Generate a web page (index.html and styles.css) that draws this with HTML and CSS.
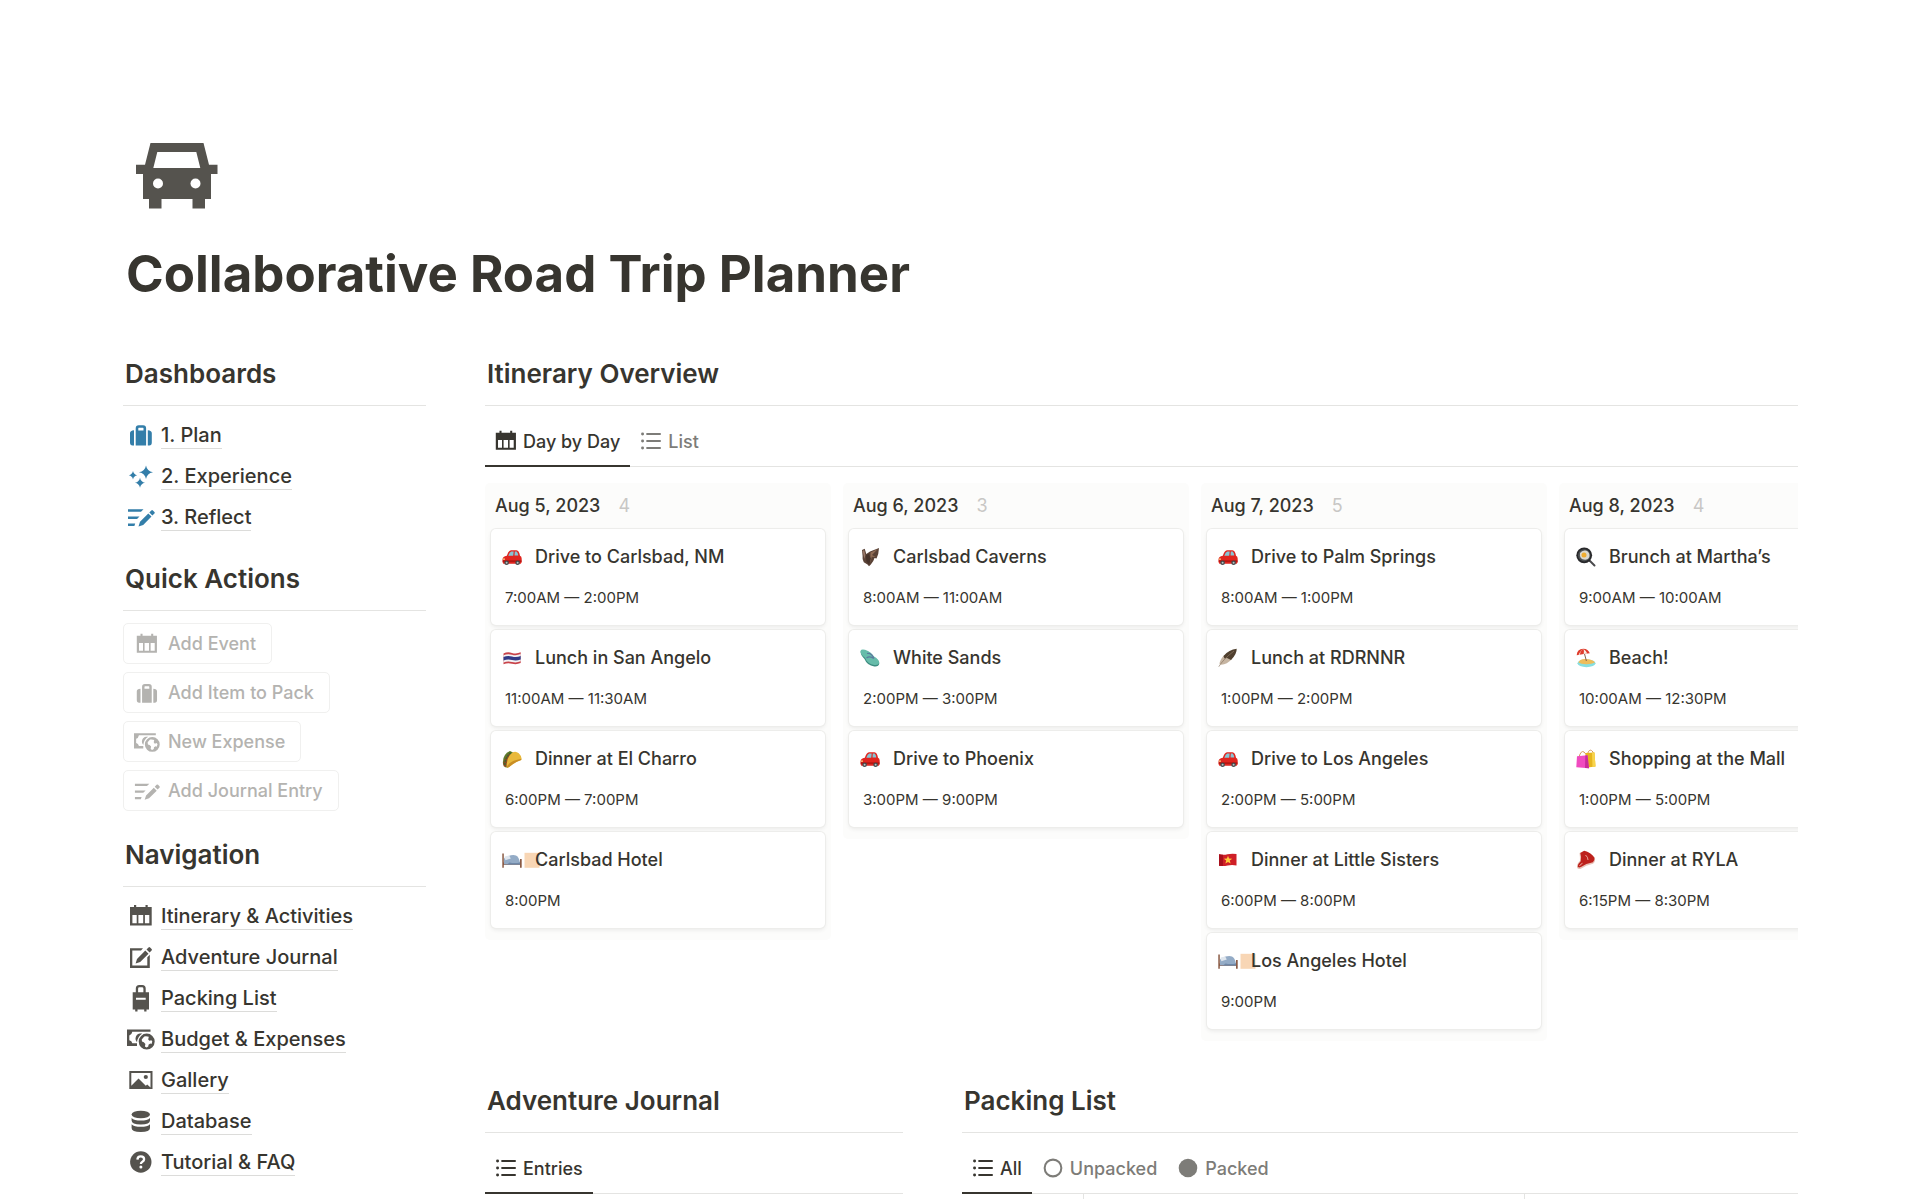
FILE: index.html
```html
<!DOCTYPE html>
<html lang="en">
<head>
    <meta charset="UTF-8">
    <meta name="viewport" content="width=device-width, initial-scale=1.0">
    <title>Collaborative Road Trip Planner</title>
    <link rel="stylesheet" href="styles.css">
</head>
<body>
    <!-- Icon sprite -->
    <svg class="sprite" aria-hidden="true">
        <symbol id="i-calendar" viewBox="0 0 28 28">
            <path fill-rule="evenodd" d="M3 5h4V3h2.2v2h9.3V3h2.2v2h4v18.4H3zM5.4 13v8.2h4.3V13zm6 0v8.2h4.8V13zm6.5 0v8.2h4.4V13z"/>
        </symbol>
        <symbol id="i-suitcase" viewBox="0 0 28 28">
            <path fill-rule="evenodd" d="M8.7 7.2q0-3 3-3h4.4q3 0 3 3v17.3H8.7zm2.6 0v2.2h5.2V7.2q0-.5-.5-.5h-4.2q-.5 0-.5.5z"/>
            <path d="M7 9.3v15.2H5.5q-2.5 0-2.5-3v-9.3q0-2.6 4-2.9zM20.8 9.3v15.2h1.5q2.5 0 2.5-3v-9.3q0-2.6-4-2.9z"/>
        </symbol>
        <symbol id="i-sparkles" viewBox="0 0 28 28">
            <path d="M19 3.500q1 5.700 7 6.700-6 1-7 6.700-1-5.700-7-6.700 6-1 7-6.700zM6 9q.7 3.500 4.200 4.200Q6.700 13.900 6 17.400q-.7-3.500-4.200-4.200Q5.300 12.500 6 9zM13 15.800q.8 4.200 5 5-4.200.8-5 5-.8-4.200-5-5 4.200-.8 5-5z"/>
        </symbol>
        <symbol id="i-reflect" viewBox="0 0 28 28">
            <path d="M1 6.200h15.500L14 8.700H1zM1 13.400h11.500L10 15.900H1zM1 20.500h7.200l-.8 2.400H1z"/>
            <path d="M11.500 23.400l1.500-4.600 8.300-8.400 3.200 3.200-8.300 8.300zM22.300 9.400l2-2q.8-.8 1.600 0l1.500 1.500q.8.8 0 1.600l-2 2z"/>
        </symbol>
        <symbol id="i-edit" viewBox="0 0 28 28">
            <path d="M3 5.300h13L14 7.500H5.300v15h15v-8.300l2.500-2.500v13.200H3z"/>
            <path d="M8.600 20.600l1.400-4.700 8.300-8.300 3.200 3.200-8.300 8.300zM19.500 6.400l2-2q.8-.8 1.600 0l1.500 1.500q.8.8 0 1.600l-2 2z"/>
        </symbol>
        <symbol id="i-luggage" viewBox="0 0 28 28">
            <path fill-rule="evenodd" d="M8.800 8.300V4.500q0-3.500 3.500-3.500h2.900q3.500 0 3.500 3.500v3.800H22v17.200h-2.500v2h-2.300v-2h-6.700v2H8.200v-2H5.700V8.300zm2.300 0h5.300V4.700q0-1.400-1.400-1.400h-2.500q-1.400 0-1.400 1.400zM9 13.700v2h9.700v-2z"/>
        </symbol>
        <symbol id="i-money" viewBox="0 0 28 28">
            <path d="M0 4.500h23.500v2.300H5.300q-.5 3-3 3.800v4.600q2.500.6 3 3H10V21H0z"/>
            <path d="M10 17.200q-1.800-1.600-1.500-4Q9 9 12.800 8.400h2.500Q10.500 11.500 10 17.200z"/>
            <path fill-rule="evenodd" d="M19.700 8.600a8 8 0 1 1 0 16 8 8 0 0 1 0-16zm-2.400 2.800l-2.600 3 .3 2.200 1.800.6 1.600 1.700-.5 2.600 1.600 1 1.800-1 .2-1.800 1.800-1.200 1.200.5.800-2.600-.9-1.200-2 .6-1.200-1.400.6-2.600q-2.300-1-4.500-.4z"/>
        </symbol>
        <symbol id="i-image" viewBox="0 0 28 28">
            <path fill-rule="evenodd" d="M2.300 5h23.200v18H2.300zm2 2v12.700l7.200-7.200 7.300 7.300 1.400-1.400 3.300 3V7z"/>
            <circle cx="18.800" cy="11" r="2.100"/>
        </symbol>
        <symbol id="i-database" viewBox="0 0 28 28">
            <ellipse cx="13.800" cy="7.500" rx="9.200" ry="3.800"/>
            <path d="M4.600 11q2.500 2.600 9.200 2.600T23 11v2.500q0 4-9.200 4t-9.200-4zM4.600 17.200q2.500 2.600 9.200 2.600t9.200-2.600V21q0 4-9.200 4t-9.200-4z"/>
        </symbol>
        <symbol id="i-help" viewBox="0 0 28 28">
            <circle cx="13.800" cy="14" r="10.700"/>
            <path d="M10.400 11.600q.1-3.200 3.400-3.200 3.300 0 3.300 2.800 0 1.500-1.700 2.500-1.500.9-1.500 2.300" fill="none" stroke="#fff" stroke-width="2.300"/>
            <circle cx="13.900" cy="18.900" r="1.500" fill="#fff"/>
        </symbol>
        <symbol id="i-list" viewBox="0 0 28 28">
            <path d="M9 5.500h15.500v2H9zM9 13h15.500v2H9zM9 20.500h15.500v2H9z"/>
            <circle cx="4.900" cy="6.500" r="1.600"/><circle cx="4.900" cy="14" r="1.600"/><circle cx="4.900" cy="21.500" r="1.600"/>
        </symbol>
        <symbol id="i-ring" viewBox="0 0 28 28">
            <circle cx="14" cy="14" r="9" fill="none" stroke="currentColor" stroke-width="2.200"/>
        </symbol>
        <symbol id="i-dot" viewBox="0 0 28 28">
            <circle cx="14" cy="14" r="10"/>
        </symbol>

        <!-- Event pictures -->
        <symbol id="e-car" viewBox="0 0 20 20">
            <path fill="#e0251f" d="M.5 12.500q.2-3 4.300-3.700Q6.500 3.500 9 3.200h5.500q2.700.3 3.500 5.500 1.700.7 1.700 3v3.500l-1 1.600H1.300L.5 15z"/>
            <path fill="#86c5d4" d="M6.300 8.800q1.300-3.800 3-4.200h2.400l-.5 4.200zM12.800 4.600h1.500q1.400.3 2 4h-3.800z"/>
            <path fill="#a3130f" d="M.8 13.500h18.700v1.200H.8z"/>
            <g fill="#44494b"><circle cx="4.600" cy="15.800" r="2.300"/><circle cx="15.600" cy="15.800" r="2.300"/></g>
            <g fill="#b9bfc1"><circle cx="4.600" cy="15.800" r="1"/><circle cx="15.600" cy="15.800" r="1"/></g>
            <path fill="#ffd07a" d="M1 11.500h2v1.300H1z"/>
        </symbol>
        <symbol id="e-thai" viewBox="0 0 20 20">
            <path fill="#c8434a" d="M1.500 5.400q4-1.800 8.500-.5t8.700-.6v10.800q-4.400 1.800-8.700.6t-8.500.5z"/>
            <path fill="#f2f2f4" d="M1.500 7.200q4-1.800 8.500-.5t8.700-.6v7.200q-4.400 1.800-8.700.6t-8.500.5z"/>
            <path fill="#313a86" d="M1.500 9q4-1.800 8.500-.5t8.700-.6v3.600q-4.400 1.800-8.700.6t-8.500.5z"/>
        </symbol>
        <symbol id="e-taco" viewBox="0 0 20 20">
            <path fill="#5d7a2b" d="M1 15Q0 5.500 8 2l4 2-6 14.500-3-.2z"/>
            <path fill="#8c4a22" d="M1.200 14.500q2-7.500 7-10.700L9 6l-5 12-2.300-.8z"/>
            <path fill="#e9b93b" d="M4.600 18.300Q4.300 8 10.500 3.500q3-2 6.300.7Q20.500 8 19.200 11q-7 2.500-11.400 6.500-1.500 1.500-3.200.8z"/>
            <path fill="#c98e24" d="M4.600 18.300q2.500-6.500 14.800-8.600l-.2 1.300q-7 2.500-11.400 6.500-1.500 1.500-3.200.8z"/>
            <path fill="none" stroke="#2f6a35" stroke-width="1.200" stroke-dasharray="2 1" d="M2.800 16Q3 8 9.300 3.300"/>
        </symbol>
        <symbol id="e-bed" viewBox="0 0 20 20">
            <path fill="#8a5a44" d="M.3 3.500h1.500v9H18V9h1.700v8.800H18V15H1.800v2.700H.3z"/>
            <path fill="#93abc6" d="M3 7.500q7-3.500 11-2Q17 7 18 12.800v1.600H2V8.500z"/>
            <path fill="#dfe6ee" d="M2.600 6.600l4.600-1 1.600 3-5.500 1.600z"/>
            <path fill="#6e88a8" d="M7.500 12.500q5 1 10.500 0v1.900H5z"/>
            <path fill="#f8d6b5" d="M22.500 2.800h15v15h-15z"/>
        </symbol>
        <symbol id="e-bat" viewBox="0 0 20 20">
            <path fill="#5a4236" d="M10 4.500L19 1q-.2 6-2.500 10.500l-2-.5-1.200 3-2.500 3.500-1.800 1.800-1.500-1.800-3.700-2.200Q2 12 2.600 9L2 3l2.700-1.200L6.300 7z"/>
            <path fill="#8f6c55" d="M10.500 5.500L17.500 2.300 12 8l3.800 2-4-.3-1.500 6z"/>
            <path fill="#463229" d="M5.800 8l3-1 2 4.500-1.600 6-2.700-3z"/>
            <path fill="#9a7868" d="M2.600 4l1.500-1 1.300 5-1 4z"/>
        </symbol>
        <symbol id="e-sandal" viewBox="0 0 20 20">
            <path fill="#3c8c80" d="M.6 3.500Q1 1.600 5 2.500q6.500 2 8.600 6.500 5.600 3 5.700 6.500-.6 3.400-5 2.900Q7 17.500 4.500 11 .5 7 .6 3.500z"/>
            <path fill="#67bcaa" d="M.6 2.700Q1.200.8 5 1.700q6.500 2 8.600 6.500 5.600 3 5.700 6.500-.8 2.800-5 2.200Q7.500 16 5 9.700 0 6 .6 2.700z"/>
            <path fill="none" stroke="#5c7a9e" stroke-width="1.200" d="M7 5.500Q11.500 4.500 14 10.500M6.500 10q3-2.500 7.500.5"/>
        </symbol>
        <symbol id="e-feather" viewBox="0 0 20 20">
            <path fill="#c6b5a2" d="M1.500 16Q2 11 6.500 7l7.500 4Q9 16.500 3.300 16.800z"/>
            <path fill="#50402f" d="M5.500 8Q11 1.500 18.700.8 19 6 13 12L9 10l-2.500.5z"/>
            <path fill="none" stroke="#8b7763" stroke-width=".7" d="M.8 18.700Q5 11.500 16 3"/>
        </symbol>
        <symbol id="e-viet" viewBox="0 0 20 20">
            <path fill="#cf1f27" d="M1 4.300q4.500 1 8.500 0t9-.3v11.500q-4.500-1-8.800 0T1 15.800z"/>
            <path fill="#a80f1c" d="M1 4.300l4 .4v11.400l-4-.3z"/>
            <path fill="#ffc93c" d="M10 5.700l1.100 2.900 3.100.1-2.400 1.900.8 3-2.600-1.700-2.600 1.700.8-3-2.400-1.900 3.100-.1z"/>
        </symbol>
        <symbol id="e-pan" viewBox="0 0 20 20">
            <path stroke="#4a4a4c" stroke-width="2" stroke-linecap="round" d="M13.500 13.500L18.500 18.500"/>
            <circle cx="8.200" cy="8.300" r="7.900" fill="#28292b"/>
            <circle cx="8.200" cy="8.300" r="6.100" fill="#4d5153"/>
            <path fill="#dcd9cf" d="M4 6q2-3 5.500-2.500T13.500 8q.3 4-4 4.700Q3 13 4 6z"/>
            <circle cx="8" cy="8" r="2.500" fill="#f0ad31"/>
        </symbol>
        <symbol id="e-beach" viewBox="0 0 20 20">
            <ellipse cx="10.500" cy="15.300" rx="9" ry="3.900" fill="#87dfe0"/>
            <path fill="#eebd5b" d="M2.500 14.500q1-3.500 6-3.600 8-.2 10.500 3.600-4 2-9 1.800t-7.500-1.800z"/>
            <path stroke="#85604a" stroke-width="1" d="M8 4l2.400 9"/>
            <path fill="#df3c2c" d="M.7 7.200Q1 1 7.300.7q5 .2 6.500 4.600l-6 .8z"/>
            <path fill="#f7eee3" d="M4 6.800Q4 3 7.300.9q-2.500 1-4.700 5.900zM7.700 6q.8-3-.3-5 2.800 1.700 3.800 4.600z"/>
        </symbol>
        <symbol id="e-bags" viewBox="0 0 20 20">
            <path fill="none" stroke="#d79a5d" stroke-width="1" d="M11.500 5Q13 0 15.500 1.500T17 5M3 8Q5 1 8 3t2 5"/>
            <path fill="#e6b51f" d="M9.500 4l9-.5 1 14-8 1z"/>
            <path fill="#f8d44c" d="M16 3.800l2.500-.3 1 14-3 .4z"/>
            <path fill="#f04bc0" d="M1 7.200l10.500-1 1.500 13L.3 18.300z"/>
            <path fill="#c92c9b" d="M9.300 6.500l2.200-.3 1.500 13-4-.3z"/>
        </symbol>
        <symbol id="e-meat" viewBox="0 0 20 20">
            <path fill="#e8c2b8" d="M1 17.500q-.5-3.500 3-6.800Q4 6.500 3.500 3L8 1q7 1.500 11 7 .5 4-2 5.800Q10 15 4.500 19q-2.800.5-3.500-1.500z"/>
            <path fill="#bd211c" d="M1.700 16.500q.3-3 3-5.300Q5.500 6 4.300 3L8.200.8q6.500 1.700 10.200 6.900.5 3-1.500 4.500-7 1.200-12 4.800-2.200 1-3.200-.5z"/>
            <path fill="none" stroke="#eeb3a8" stroke-width=".9" d="M9.500 5q2.500 2 2.500 5M3.500 16q1-2 3-2.700"/>
        </symbol>
    </svg>

    <div class="page">
        <header class="page-header">
            <svg class="page-icon" viewBox="0 0 108 108" aria-hidden="true">
                <path fill-rule="evenodd" d="M27.500 21h53l5.500 21.700h8.500v9.300H88v25h-6v9.500H69.500V77H38.500v9.500H26V77h-6V52h-7v-9.300h9zM34.300 30L30.300 46h47l-4-16z"/>
                <circle cx="35" cy="61.500" r="5" fill="#fff"/><circle cx="72.500" cy="61.500" r="5" fill="#fff"/>
            </svg>
            <h1 class="page-title">Collaborative Road Trip Planner</h1>
        </header>

        <div class="layout">
            <aside class="sidebar">
                <section class="section">
                    <h2 class="section-title">Dashboards</h2>
                    <nav class="links links-blue">
                        <a class="link" href="#plan"><svg class="icon"><use href="#i-suitcase"/></svg><span class="link-text">1. Plan</span></a>
                        <a class="link" href="#experience"><svg class="icon"><use href="#i-sparkles"/></svg><span class="link-text">2. Experience</span></a>
                        <a class="link" href="#reflect"><svg class="icon"><use href="#i-reflect"/></svg><span class="link-text">3. Reflect</span></a>
                    </nav>
                </section>

                <section class="section">
                    <h2 class="section-title">Quick Actions</h2>
                    <div class="actions">
                        <button class="action" type="button"><svg class="icon-sm"><use href="#i-calendar"/></svg>Add Event</button>
                        <button class="action" type="button"><svg class="icon-sm"><use href="#i-suitcase"/></svg>Add Item to Pack</button>
                        <button class="action" type="button"><svg class="icon-sm"><use href="#i-money"/></svg>New Expense</button>
                        <button class="action" type="button"><svg class="icon-sm"><use href="#i-reflect"/></svg>Add Journal Entry</button>
                    </div>
                </section>

                <section class="section">
                    <h2 class="section-title">Navigation</h2>
                    <nav class="links">
                        <a class="link" href="#itinerary"><svg class="icon"><use href="#i-calendar"/></svg><span class="link-text">Itinerary &amp; Activities</span></a>
                        <a class="link" href="#journal"><svg class="icon"><use href="#i-edit"/></svg><span class="link-text">Adventure Journal</span></a>
                        <a class="link" href="#packing"><svg class="icon"><use href="#i-luggage"/></svg><span class="link-text">Packing List</span></a>
                        <a class="link" href="#budget"><svg class="icon"><use href="#i-money"/></svg><span class="link-text">Budget &amp; Expenses</span></a>
                        <a class="link" href="#gallery"><svg class="icon"><use href="#i-image"/></svg><span class="link-text">Gallery</span></a>
                        <a class="link" href="#database"><svg class="icon"><use href="#i-database"/></svg><span class="link-text">Database</span></a>
                        <a class="link" href="#faq"><svg class="icon"><use href="#i-help"/></svg><span class="link-text">Tutorial &amp; FAQ</span></a>
                    </nav>
                </section>
            </aside>

            <main class="content">
                <section id="itinerary">
                    <h2 class="section-title">Itinerary Overview</h2>
                    <div class="tabs" role="tablist">
                        <button class="tab active" type="button" role="tab"><svg class="icon-sm"><use href="#i-calendar"/></svg>Day by Day</button>
                        <button class="tab" type="button" role="tab"><svg class="icon-sm"><use href="#i-list"/></svg>List</button>
                    </div>

                    <div class="board">
                        <div class="day">
                            <h3 class="day-title">Aug 5, 2023 <span class="day-count">4</span></h3>
                            <article class="card">
                                <h4 class="card-title"><svg class="emoji"><use href="#e-car"/></svg><span>Drive to Carlsbad, NM</span></h4>
                                <p class="card-time">7:00AM — 2:00PM</p>
                            </article>
                            <article class="card">
                                <h4 class="card-title"><svg class="emoji"><use href="#e-thai"/></svg><span>Lunch in San Angelo</span></h4>
                                <p class="card-time">11:00AM — 11:30AM</p>
                            </article>
                            <article class="card">
                                <h4 class="card-title"><svg class="emoji"><use href="#e-taco"/></svg><span>Dinner at El Charro</span></h4>
                                <p class="card-time">6:00PM — 7:00PM</p>
                            </article>
                            <article class="card">
                                <h4 class="card-title"><svg class="emoji"><use href="#e-bed"/></svg><span>Carlsbad Hotel</span></h4>
                                <p class="card-time">8:00PM</p>
                            </article>
                        </div>

                        <div class="day">
                            <h3 class="day-title">Aug 6, 2023 <span class="day-count">3</span></h3>
                            <article class="card">
                                <h4 class="card-title"><svg class="emoji"><use href="#e-bat"/></svg><span>Carlsbad Caverns</span></h4>
                                <p class="card-time">8:00AM — 11:00AM</p>
                            </article>
                            <article class="card">
                                <h4 class="card-title"><svg class="emoji"><use href="#e-sandal"/></svg><span>White Sands</span></h4>
                                <p class="card-time">2:00PM — 3:00PM</p>
                            </article>
                            <article class="card">
                                <h4 class="card-title"><svg class="emoji"><use href="#e-car"/></svg><span>Drive to Phoenix</span></h4>
                                <p class="card-time">3:00PM — 9:00PM</p>
                            </article>
                        </div>

                        <div class="day">
                            <h3 class="day-title">Aug 7, 2023 <span class="day-count">5</span></h3>
                            <article class="card">
                                <h4 class="card-title"><svg class="emoji"><use href="#e-car"/></svg><span>Drive to Palm Springs</span></h4>
                                <p class="card-time">8:00AM — 1:00PM</p>
                            </article>
                            <article class="card">
                                <h4 class="card-title"><svg class="emoji"><use href="#e-feather"/></svg><span>Lunch at RDRNNR</span></h4>
                                <p class="card-time">1:00PM — 2:00PM</p>
                            </article>
                            <article class="card">
                                <h4 class="card-title"><svg class="emoji"><use href="#e-car"/></svg><span>Drive to Los Angeles</span></h4>
                                <p class="card-time">2:00PM — 5:00PM</p>
                            </article>
                            <article class="card">
                                <h4 class="card-title"><svg class="emoji"><use href="#e-viet"/></svg><span>Dinner at Little Sisters</span></h4>
                                <p class="card-time">6:00PM — 8:00PM</p>
                            </article>
                            <article class="card">
                                <h4 class="card-title"><svg class="emoji"><use href="#e-bed"/></svg><span>Los Angeles Hotel</span></h4>
                                <p class="card-time">9:00PM</p>
                            </article>
                        </div>

                        <div class="day">
                            <h3 class="day-title">Aug 8, 2023 <span class="day-count">4</span></h3>
                            <article class="card">
                                <h4 class="card-title"><svg class="emoji"><use href="#e-pan"/></svg><span>Brunch at Martha’s</span></h4>
                                <p class="card-time">9:00AM — 10:00AM</p>
                            </article>
                            <article class="card">
                                <h4 class="card-title"><svg class="emoji"><use href="#e-beach"/></svg><span>Beach!</span></h4>
                                <p class="card-time">10:00AM — 12:30PM</p>
                            </article>
                            <article class="card">
                                <h4 class="card-title"><svg class="emoji"><use href="#e-bags"/></svg><span>Shopping at the Mall</span></h4>
                                <p class="card-time">1:00PM — 5:00PM</p>
                            </article>
                            <article class="card">
                                <h4 class="card-title"><svg class="emoji"><use href="#e-meat"/></svg><span>Dinner at RYLA</span></h4>
                                <p class="card-time">6:15PM — 8:30PM</p>
                            </article>
                        </div>
                    </div>
                </section>

                <div class="lower">
                    <section id="journal">
                        <h2 class="section-title">Adventure Journal</h2>
                        <div class="tabs" role="tablist">
                            <button class="tab active" type="button" role="tab"><svg class="icon-sm"><use href="#i-list"/></svg>Entries</button>
                        </div>
                    </section>
                    <section id="packing">
                        <h2 class="section-title">Packing List</h2>
                        <div class="tabs" role="tablist">
                            <button class="tab active" type="button" role="tab"><svg class="icon-sm"><use href="#i-list"/></svg>All</button>
                            <button class="tab" type="button" role="tab"><svg class="icon-sm"><use href="#i-ring"/></svg>Unpacked</button>
                            <button class="tab" type="button" role="tab"><svg class="icon-sm"><use href="#i-dot"/></svg>Packed</button>
                        </div>
                        <div class="pack-grid"><div></div><div></div><div></div></div>
                    </section>
                </div>
            </main>
        </div>
    </div>
</body>
</html>
```
FILE: styles.css
```css
:root {
    --text: #37352f;
    --icon: #55534e;
    --blue: #337ea9;
    --muted: #7d7c78;
    --faint: #c8c7c5;
    --line: #e4e4e2;
    --column-bg: #fcfcfb;
}

* {
    box-sizing: border-box;
    margin: 0;
    padding: 0;
}

body {
    font-family: Inter, "Liberation Sans", sans-serif;
    background: #fff;
    color: var(--text);
}

button {
    font-family: inherit;
    background: none;
    border: none;
    cursor: pointer;
}

.sprite {
    position: absolute;
    width: 0;
    height: 0;
}

.page {
    height: 100vh;
    overflow: hidden;
    padding: 122px 122px 0 123px;
}

/* Header */
.page-icon {
    display: block;
    width: 108px;
    height: 108px;
    fill: var(--icon);
}

.page-title {
    margin-top: 14px;
    padding-left: 3px;
    font-size: 51px;
    line-height: 60px;
    font-weight: 700;
}

/* Two columns */
.layout {
    display: grid;
    grid-template-columns: 3fr 13fr;
    gap: 59px;
    margin-top: 54px;
}

.content,
.lower > section {
    min-width: 0;
}

.section + .section {
    margin-top: 26px;
}

.section-title {
    padding: 0 0 15px 2px;
    border-bottom: 1px solid var(--line);
    font-size: 26px;
    line-height: 32px;
    font-weight: 600;
}

/* Sidebar links */
.links {
    margin-top: 8px;
}

.link {
    display: flex;
    align-items: center;
    gap: 6px;
    height: 41px;
    padding-left: 4px;
    color: var(--text);
    font-size: 20px;
    font-weight: 500;
    text-decoration: none;
}

.link-text {
    padding: 2px 0 1px;
    border-bottom: 1px solid #dcdcda;
}

.icon {
    width: 28px;
    height: 28px;
    fill: var(--icon);
}

.links-blue .icon {
    fill: var(--blue);
}

.icon-sm {
    width: 26px;
    height: 26px;
    fill: currentColor;
}

/* Quick actions */
.actions {
    display: flex;
    flex-direction: column;
    align-items: flex-start;
    gap: 8px;
    padding: 12px 0 2px;
}

.action {
    display: flex;
    align-items: center;
    gap: 8px;
    height: 41px;
    padding: 0 15px 0 10px;
    border: 1px solid #f0f0ef;
    border-radius: 5px;
    color: #b4b3b0;
    font-size: 18px;
    font-weight: 500;
}

/* Tabs */
.tabs {
    display: flex;
    height: 52px;
    margin-top: 9px;
    border-bottom: 1px solid var(--line);
}

.tab {
    display: flex;
    align-items: center;
    gap: 4px;
    height: 52px;
    padding: 0 10px 0 8px;
    color: var(--muted);
    font-size: 18px;
    font-weight: 500;
}

.tab.active {
    color: var(--text);
    box-shadow: inset 0 -2px 0 var(--text);
}

/* Board */
.board {
    display: flex;
    align-items: flex-start;
    gap: 12px;
    margin-top: 16px;
    overflow: hidden;
}

.day {
    display: flex;
    flex: 0 0 346px;
    flex-direction: column;
    gap: 5px;
    padding: 0 6px 12px;
    border-radius: 5px;
    background: var(--column-bg);
}

.day-title {
    display: flex;
    align-items: center;
    gap: 18px;
    height: 41px;
    padding: 4px 4px 0;
    font-size: 18px;
    font-weight: 500;
}

.day-count {
    color: var(--faint);
    font-weight: 400;
}

.card {
    padding: 16px 11px 17px;
    border-radius: 5px;
    background: #fff;
    box-shadow: 0 0 0 1px #ededeb, 0 2px 4px rgba(15, 15, 15, 0.08);
}

.card-title {
    display: flex;
    align-items: center;
    gap: 13px;
    font-size: 18px;
    line-height: 24px;
    font-weight: 500;
}

.emoji {
    width: 20px;
    height: 20px;
    overflow: visible;
}

/* the bed picture runs past its own box */
#e-bed {
    overflow: visible;
}

.card-time {
    margin-top: 19px;
    padding-left: 3px;
    font-size: 15px;
    line-height: 20px;
}

/* Journal and packing list */
.lower {
    display: grid;
    grid-template-columns: 1fr 2fr;
    gap: 59px;
    margin-top: 44px;
}

.pack-grid {
    display: grid;
    grid-template-columns: 121px 441px 1fr;
    height: 40px;
}

.pack-grid div + div {
    border-left: 1px solid var(--line);
}
```
